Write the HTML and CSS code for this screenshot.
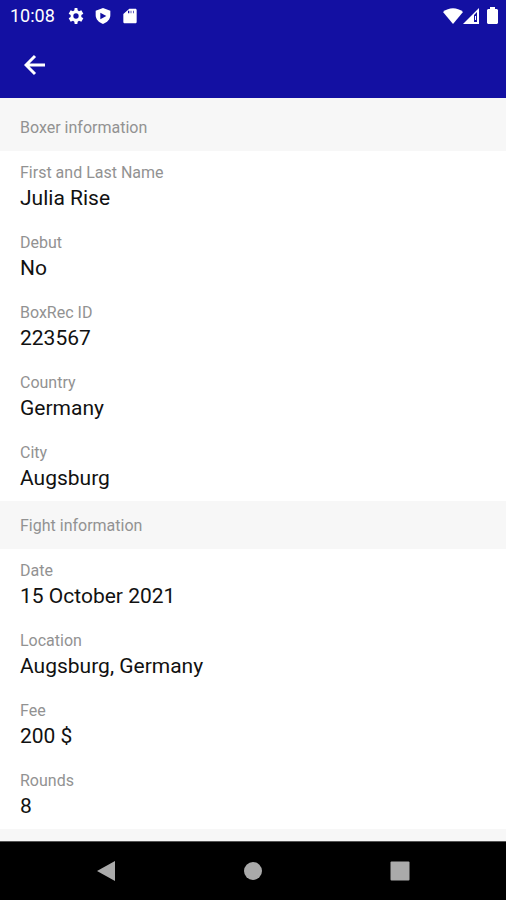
FILE: index.html
```html
<!DOCTYPE html>
<html lang="en">
<head>
  <meta charset="UTF-8">
  <meta name="viewport" content="width=device-width, initial-scale=1">
  <title>Boxer information</title>
  <link rel="stylesheet" href="styles.css">
</head>
<body>
  <header class="top">
    <div class="status-bar">
      <span class="clock">10:08</span>
      <svg class="status-icon" viewBox="0 0 24 24" aria-hidden="true"><path fill-rule="evenodd" d="M20 13.500v-3l3-2-3-5-3.500 1.500-2-1.500L14 0h-4l-.5 3.500-2 1.500L4 3.500l-3 5 3 2v3l-3 2 3 5L7.500 19l2 1.500L10 24h4l.5-3.500 2-1.500 3.500 1.500 3-5zM12 16a4 4 0 1 1 0-8 4 4 0 0 1 0 8z"/></svg>
      <svg class="status-icon" viewBox="0 0 24 24" aria-hidden="true"><path fill-rule="evenodd" d="M12 0 1 4v7c0 6 5 11 11 13 6-2 11-7 11-13V4zM8 7v10l9-5z"/></svg>
      <svg class="status-icon" viewBox="0 0 24 24" aria-hidden="true"><path fill-rule="evenodd" d="M20 1h-9L2 9v12c0 1 1 2 2 2h16c1 0 2-1 2-2V3c0-1-1-2-2-2zM9 8h2V4H9zm4 0h1V4h-1zm4 0h1V4h-1z"/></svg>
      <div class="signals">
        <svg width="20" height="16" viewBox="0 0 20 16" aria-hidden="true"><path d="M0 4C6-1 14-1 20 4L10 16z"/></svg>
        <svg width="16" height="16" viewBox="0 0 16 16" aria-hidden="true"><path fill-rule="evenodd" d="M16 0v16H0zM11 7v7h3V4z"/><path d="M12 8h1v4h-1z"/></svg>
        <svg class="battery" width="11" height="17" viewBox="0 0 11 17" aria-hidden="true"><path d="M3 0h5v2h2l1 1v13l-1 1H1l-1-1V3l1-1h2z"/></svg>
      </div>
    </div>
    <div class="toolbar">
      <button class="back" type="button" aria-label="Back">
        <svg width="22" height="22" viewBox="0 0 22 22" aria-hidden="true"><path d="M21 11H2M11 2l-9 9 9 9"/></svg>
      </button>
    </div>
  </header>

  <main class="content">
    <section>
      <h2 class="section-title">Boxer information</h2>
      <dl class="fields">
        <div class="field"><dt>First and Last Name</dt><dd>Julia Rise</dd></div>
        <div class="field"><dt>Debut</dt><dd>No</dd></div>
        <div class="field"><dt>BoxRec ID</dt><dd>223567</dd></div>
        <div class="field"><dt>Country</dt><dd>Germany</dd></div>
        <div class="field"><dt>City</dt><dd>Augsburg</dd></div>
      </dl>
    </section>
    <section>
      <h2 class="section-title">Fight information</h2>
      <dl class="fields">
        <div class="field"><dt>Date</dt><dd>15 October 2021</dd></div>
        <div class="field"><dt>Location</dt><dd>Augsburg, Germany</dd></div>
        <div class="field"><dt>Fee</dt><dd>200 $</dd></div>
        <div class="field"><dt>Rounds</dt><dd>8</dd></div>
      </dl>
    </section>
  </main>

  <nav class="nav-bar">
    <button type="button" aria-label="Back"><svg width="20" height="22" viewBox="0 0 20 22"><path d="M19 1v20L1 11z"/></svg></button>
    <button type="button" aria-label="Home"><svg width="20" height="20" viewBox="0 0 20 20"><circle cx="10" cy="10" r="9"/></svg></button>
    <button type="button" aria-label="Recent apps"><svg width="20" height="20" viewBox="0 0 20 20"><rect x="0.5" y="0.5" width="19" height="19" rx="1"/></svg></button>
  </nav>
</body>
</html>
```
FILE: styles.css
```css
* {
  box-sizing: border-box;
}
body {
  margin: 0;
  height: 100vh;
  display: flex;
  flex-direction: column;
  font-family: Roboto, "Liberation Sans", sans-serif;
  background: #f7f7f7;
  color: #111;
}
button {
  display: flex;
  align-items: center;
  justify-content: center;
  padding: 0;
  border: none;
  background: none;
  cursor: pointer;
}
.top {
  background: #1310a2;
  color: #fff;
}
.status-bar {
  display: flex;
  align-items: center;
  height: 31px;
  padding: 0 8px 0 10px;
  gap: 11px;
  fill: #fff;
}
.clock {
  font-size: 18px;
  margin-right: 2px;
}
.status-icon {
  width: 16px;
  height: 16px;
}
.signals {
  display: flex;
  align-items: center;
  margin-left: auto;
}
.battery {
  margin-left: 8px;
}
.toolbar {
  display: flex;
  align-items: center;
  height: 67px;
  padding: 0 16px;
}
.back {
  width: 38px;
  height: 38px;
  fill: none;
  stroke: #fff;
  stroke-width: 3;
}
.content {
  flex: 1;
  min-height: 0;
  padding-top: 5px;
  overflow: hidden;
}
.section-title {
  margin: 0;
  padding: 2px 20px 0;
  font-size: 16px;
  font-weight: 400;
  line-height: 46px;
  color: #929292;
}
.fields {
  margin: 0;
  background: #fff;
}
.field {
  height: 70px;
  padding: 12px 20px 0;
}
.field dt {
  font-size: 16px;
  line-height: 20px;
  color: #929292;
}
.field dd {
  margin: 0;
  font-size: 21px;
  line-height: 30px;
}
.nav-bar {
  display: flex;
  justify-content: center;
  height: 59px;
  background: #000;
  border-top: 1px solid #555;
  fill: #aaa;
}
.nav-bar button {
  width: 29%;
}
```
